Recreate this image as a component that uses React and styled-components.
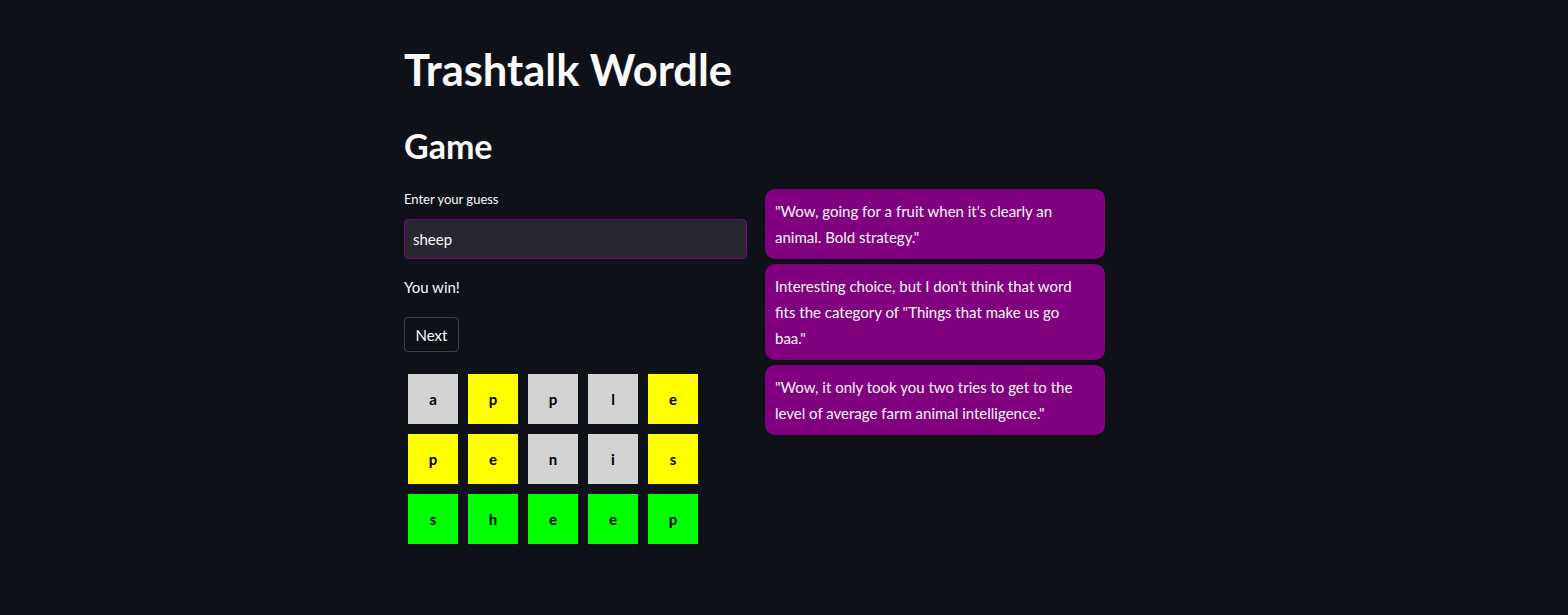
import React from 'react';
import styled, { createGlobalStyle } from 'styled-components';

const GlobalStyle = createGlobalStyle`
  html, body {
    margin: 0;
    background: #0e1117;
    color: #fafafa;
    font-family: Lato, "Open Sans", sans-serif;
  }
`;

const Main = styled.div`
  width: 704px;
  margin-left: calc(50% - 380px);
  padding: 38px 0 40px 0;
`;

const Title = styled.h1`
  margin: 0;
  font-size: 43.5px;
  font-weight: 700;
  line-height: 62px;
`;

const Subtitle = styled.h2`
  margin: 20px 0 0 0;
  font-size: 34px;
  font-weight: 700;
  line-height: 52px;
`;

const Columns = styled.div`
  display: grid;
  grid-template-columns: 343px 340px;
  column-gap: 18px;
  margin-top: 17px;
`;

const LeftCol = styled.div`
  display: flex;
  flex-direction: column;
`;

const Label = styled.label`
  font-size: 13px;
  line-height: 20px;
`;

const Input = styled.input`
  box-sizing: border-box;
  margin-top: 10px;
  width: 100%;
  height: 40px;
  background: #262730;
  border: 1px solid #800080;
  border-radius: 4px;
  color: #fafafa;
  font-family: inherit;
  font-size: 15px;
  padding: 0 8px;
  outline: none;
`;

const Status = styled.p`
  margin: 17px 0 0 0;
  font-size: 15px;
  line-height: 22px;
`;

const NextButton = styled.button`
  align-self: flex-start;
  margin-top: 19px;
  height: 35px;
  padding: 0 10.5px;
  background: transparent;
  color: #fafafa;
  border: 1px solid rgba(250, 250, 250, 0.2);
  border-radius: 4px;
  font-family: inherit;
  font-size: 15px;
`;

const Board = styled.div`
  display: grid;
  grid-template-columns: repeat(5, 50px);
  gap: 10px;
  margin: 22px 0 0 4px;
`;

const Tile = styled.div`
  width: 50px;
  height: 50px;
  display: flex;
  align-items: center;
  justify-content: center;
  background: ${p => p.$color};
  color: #000;
  font-weight: 700;
  font-size: 15px;
`;

const Messages = styled.div`
  display: flex;
  flex-direction: column;
  gap: 5px;
`;

const Bubble = styled.div`
  background: #800080;
  border-radius: 10px;
  padding: 9px 14px 9px 10px;
  font-size: 15px;
  line-height: 26px;
  color: #fafafa;
`;

const COLORS = { g: '#d3d3d3', y: '#ffff00', G: '#00ff00' };

const ROWS = [
  ['apple', 'gyggy'],
  ['penis', 'yyggy'],
  ['sheep', 'GGGGG'],
];

const MESSAGES = [
  '"Wow, going for a fruit when it\'s clearly an animal. Bold strategy."',
  'Interesting choice, but I don\'t think that word fits the category of "Things that make us go baa."',
  '"Wow, it only took you two tries to get to the level of average farm animal intelligence."',
];

export default function App() {
  return (
    <>
      <GlobalStyle />
      <Main>
        <Title>Trashtalk Wordle</Title>
        <Subtitle>Game</Subtitle>
        <Columns>
          <LeftCol>
            <Label>Enter your guess</Label>
            <Input defaultValue="sheep" />
            <Status>You win!</Status>
            <NextButton>Next</NextButton>
            <Board>
              {ROWS.map(([word, marks]) =>
                word.split('').map((ch, i) => (
                  <Tile key={word + i} $color={COLORS[marks[i]]}>{ch}</Tile>
                ))
              )}
            </Board>
          </LeftCol>
          <Messages>
            {MESSAGES.map(m => <Bubble key={m}>{m}</Bubble>)}
          </Messages>
        </Columns>
      </Main>
    </>
  );
}
